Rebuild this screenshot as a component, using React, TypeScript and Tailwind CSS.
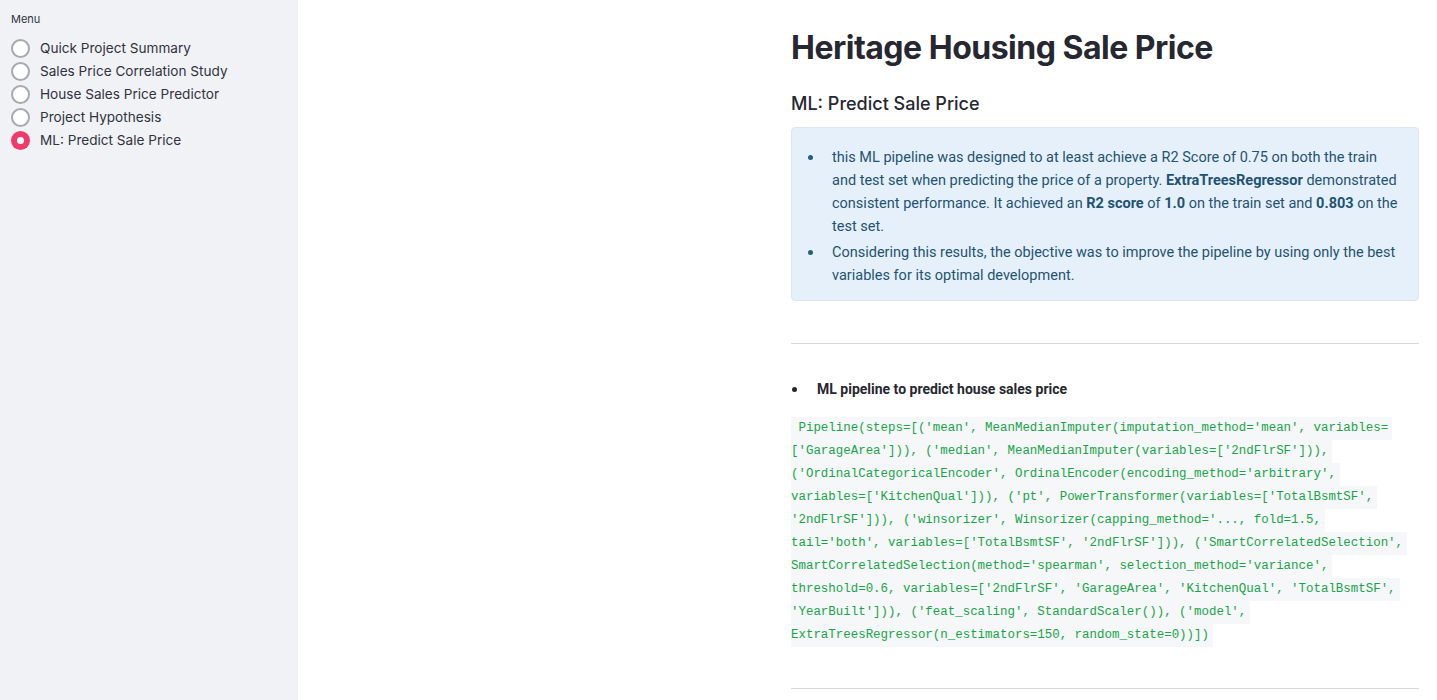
const menu = [
  "Quick Project Summary",
  "Sales Price Correlation Study",
  "House Sales Price Predictor",
  "Project Hypothesis",
  "ML: Predict Sale Price",
];

const pipeline = [
  "Pipeline(steps=[('mean', MeanMedianImputer(imputation_method='mean', variables=",
  "['GarageArea'])), ('median', MeanMedianImputer(variables=['2ndFlrSF'])),",
  "('OrdinalCategoricalEncoder', OrdinalEncoder(encoding_method='arbitrary',",
  "variables=['KitchenQual'])), ('pt', PowerTransformer(variables=['TotalBsmtSF',",
  "'2ndFlrSF'])), ('winsorizer', Winsorizer(capping_method='..., fold=1.5,",
  "tail='both', variables=['TotalBsmtSF', '2ndFlrSF'])), ('SmartCorrelatedSelection',",
  "SmartCorrelatedSelection(method='spearman', selection_method='variance',",
  "threshold=0.6, variables=['2ndFlrSF', 'GarageArea', 'KitchenQual', 'TotalBsmtSF',",
  "'YearBuilt'])), ('feat_scaling', StandardScaler()), ('model',",
  "ExtraTreesRegressor(n_estimators=150, random_state=0))])",
];

function Radio({ label, active }: { label: string; active?: boolean }) {
  return (
    <div className="flex items-center h-[23px] gap-[10px]">
      {active ? (
        <div className="w-[19px] h-[19px] rounded-full bg-[#f03a6b] flex items-center justify-center">
          <div className="w-[7px] h-[7px] rounded-full bg-white" />
        </div>
      ) : (
        <div className="w-[19px] h-[19px] rounded-full border-2 border-[#a6a9b2] bg-white" />
      )}
      <span className="text-[13.6px] text-[#31333f]">{label}</span>
    </div>
  );
}

function Dot({ className }: { className: string }) {
  return (
    <span className="w-[24px] shrink-0 flex items-start">
      <span className={"mt-[9px] w-[5px] h-[5px] rounded-full " + className} />
    </span>
  );
}

export default function App() {
  return (
    <div className="flex min-h-[700px] bg-white text-[#31333f] font-['Inter','Noto_Sans',sans-serif]">
      <aside className="w-[298px] shrink-0 bg-[#f0f2f6] px-[11px] pt-[12px]">
        <div className="text-[11px] leading-[14px] mb-[11px]">Menu</div>
        <div className="flex flex-col">
          {menu.map((m, i) => (
            <Radio key={m} label={m} active={i === menu.length - 1} />
          ))}
        </div>
      </aside>

      <main className="flex-1 pl-[493px] pr-[18px]">
        <h1 className="mt-[28px] text-[32px] leading-[40px] font-bold text-[#262730] tracking-[-0.5px]">
          Heritage Housing Sale Price
        </h1>
        <h3 className="mt-[23px] text-[18px] leading-[26px] font-medium text-[#262730]">
          ML: Predict Sale Price
        </h3>

        <div className="mt-[10px] rounded-[4px] bg-[#e6f0fa] border border-[#dbe7f3] text-[#1f5372] pl-[16px] pt-[18px] pb-[13px] text-[14.5px] leading-[23px] font-['Roboto',sans-serif]">
          <ul className="flex flex-col gap-[3px]">
            <li className="flex">
              <Dot className="bg-[#2a5d7a]" />
              <span>
                this ML pipeline was designed to at least achieve a R2 Score of 0.75 on both the train
                <br />
                and test set when predicting the price of a property. <b>ExtraTreesRegressor</b> demonstrated
                <br />
                consistent performance. It achieved an <b>R2 score</b> of <b>1.0</b> on the train set and <b>0.803</b> on the
                <br />
                test set.
              </span>
            </li>
            <li className="flex">
              <Dot className="bg-[#2a5d7a]" />
              <span>
                Considering this results, the objective was to improve the pipeline by using only the best
                <br />
                variables for its optimal development.
              </span>
            </li>
          </ul>
        </div>

        <hr className="mt-[42px] border-t border-[#d5d6d9]" />

        <ul className="mt-[35px] font-['Roboto',sans-serif]">
          <li className="flex text-[14px] leading-[20px] font-bold text-[#262730]">
            <span className="w-[26px] shrink-0 pl-[1px] flex">
              <span className="mt-[8px] w-[5px] h-[5px] rounded-full bg-[#262730]" />
            </span>
            ML pipeline to predict house sales price
          </li>
        </ul>

        <div className="mt-[18px] font-['Liberation_Mono',monospace] text-[12.45px] leading-[23px] text-[#1aa34a]">
          {pipeline.map((l, i) => (
            <div key={i} className="w-fit whitespace-pre bg-[#f5f7f8] pr-[4px]">
              {i === 0 ? " " + l : l}
            </div>
          ))}
        </div>

        <hr className="mt-[41px] border-t border-[#d5d6d9]" />
      </main>
    </div>
  );
}
